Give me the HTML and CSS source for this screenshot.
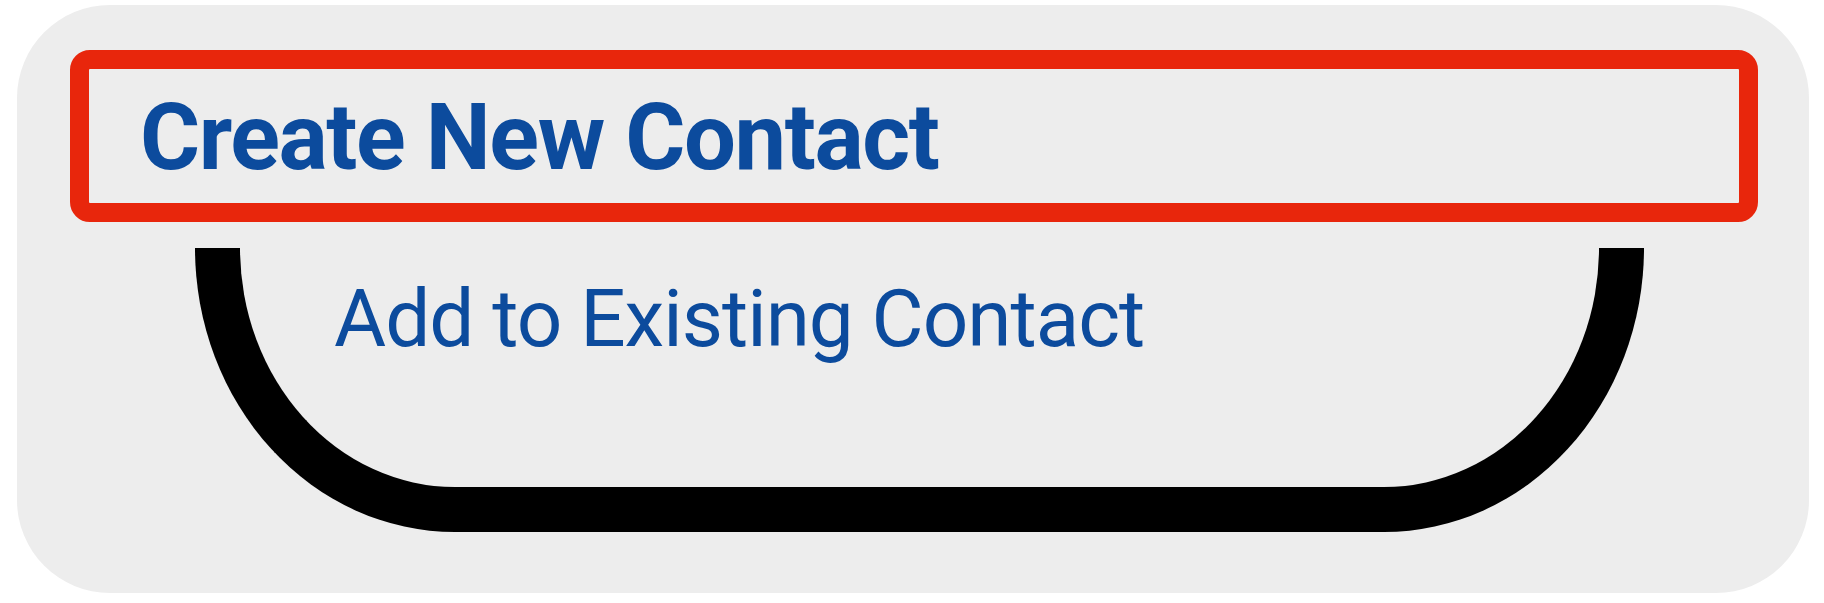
FILE: index.html
```html
<!DOCTYPE html>
<html lang="en">
<head>
    <meta charset="UTF-8">
    <title>Contact Options</title>
    <link rel="stylesheet" href="styles.css">
</head>
<body>

    <div class="sheet">
        <div class="option option-primary">
            <span>Create New Contact</span>
        </div>
        <div class="option option-secondary">
            <span>Add to Existing Contact</span>
        </div>
    </div>

</body>
</html>
```

FILE: styles.css
```css
body {
    font-family: 'Roboto', 'Liberation Sans', sans-serif;
    margin: 0;
    padding: 5px 15px 0 17px;
    background-color: #ffffff;
}
.sheet {
    width: 1792px;
    box-sizing: border-box;
    padding: 45px 51px 61px 53px;
    background-color: #ededed;
    border-radius: 93px;
}
.option {
    color: #0c4b9d;
    line-height: 1;
}
.option-primary {
    border: 19px solid #e8260c;
    border-radius: 20px;
    padding: 23px 51px 19px;
    font-size: 92px;
    font-weight: 700;
    letter-spacing: -1.4px;
}
.option-secondary {
    margin: 26px 0 0 125px;
    width: 1449px;
    height: 284px;
    box-sizing: border-box;
    border: 45px solid #000;
    border-top: none;
    border-radius: 0 0 260px 260px / 0 0 284px 284px;
    padding: 31px 0 0 94px;
    font-size: 80px;
    letter-spacing: -1px;
}
```
